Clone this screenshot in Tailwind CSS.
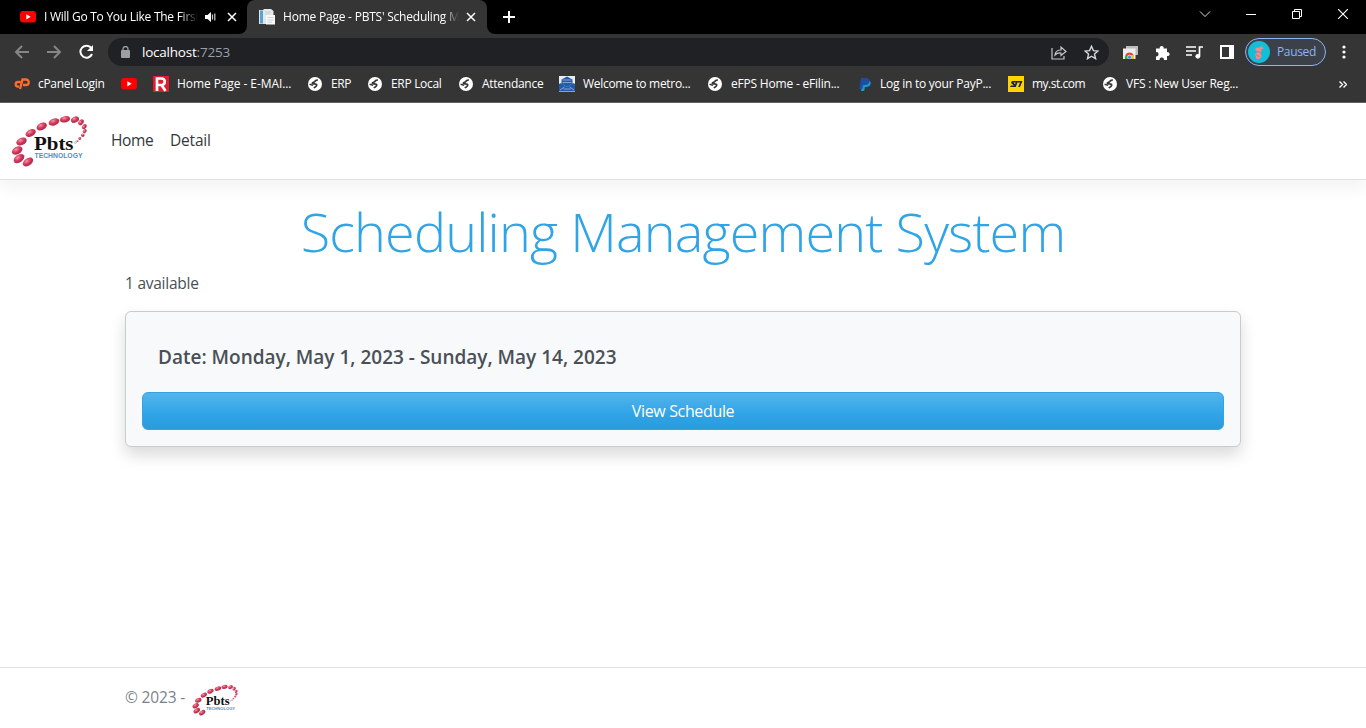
<!DOCTYPE html>
<html lang="en">
<head>
<meta charset="utf-8">
<title>Home Page - PBTS' Scheduling Management System</title>
<script src="https://cdn.jsdelivr.net/npm/@tailwindcss/browser@4"></script>
</head>
<body class="h-[728px] w-[1366px] overflow-hidden bg-white font-['Open_Sans','Noto_Sans',sans-serif]">
<svg class="absolute h-0 w-0">
  <defs><radialGradient id="bead" cx=".45" cy=".3"><stop offset="0" stop-color="#f59aae"/><stop offset=".55" stop-color="#dd4766"/><stop offset="1" stop-color="#bb3050"/></radialGradient></defs>
  <symbol id="yt" viewBox="0 0 16 12"><rect width="16" height="11.5" rx="3" fill="#f00"/><path d="M6.3 3.2v5.2l4.4-2.6z" fill="#fff"/></symbol>
  <symbol id="globe" viewBox="0 0 14 14"><circle cx="7" cy="7" r="7" fill="#fff"/><path d="M9.800 3.200C8.300 3 7.300 3.500 6.800 4.500 6 5.700 4.300 5 4.300 6.300c.2 1.200 4.200-.2 4.400 1.700.1 1.800-1.900 1.400-2.700 3.200" fill="none" stroke="#353535" stroke-width="1.700"/><path d="M1.600 7.200l3.600 1.200" stroke="#353535" stroke-width="1.500"/></symbol>
  <symbol id="logo" viewBox="11 115 78 52">
    <g fill="url(#bead)">
      <ellipse cx="65" cy="119.300" rx="5.200" ry="3.200" transform="rotate(-12 65 119.300)"/>
      <ellipse cx="75" cy="119.600" rx="4.200" ry="3" transform="rotate(-25 75 119.600)"/>
      <ellipse cx="81" cy="122.300" rx="3.300" ry="2.400" transform="rotate(-50 81 122.300)"/>
      <ellipse cx="84.300" cy="126.700" rx="2.800" ry="2" transform="rotate(-50 84.300 126.700)"/>
      <ellipse cx="84.800" cy="131.200" rx="2.300" ry="1.700" transform="rotate(-50 84.800 131.200)"/>
      <circle cx="82.800" cy="135.200" r="1.700"/><circle cx="79.800" cy="138.500" r="1.400"/><circle cx="77.500" cy="141" r="1"/>
      <ellipse cx="54" cy="122" rx="5.500" ry="3.400" transform="rotate(-20 54 122)"/>
      <ellipse cx="41.700" cy="126.500" rx="5.500" ry="3.500" transform="rotate(-25 41.700 126.500)"/>
      <ellipse cx="30.700" cy="133" rx="5.500" ry="3.500" transform="rotate(-28 30.700 133)"/>
      <ellipse cx="21.500" cy="141.500" rx="5.500" ry="3.600" transform="rotate(-25 21.500 141.500)"/>
      <ellipse cx="17.200" cy="150.500" rx="5.700" ry="3.700" transform="rotate(-30 17.200 150.500)"/>
      <ellipse cx="19" cy="158.600" rx="6" ry="3.800" transform="rotate(-35 19 158.600)"/>
      <ellipse cx="28" cy="162" rx="5.800" ry="3.600" transform="rotate(-35 28 162)"/>
    </g>
    <text x="34" y="150" font-family="Liberation Serif" font-weight="700" font-size="19.500" textLength="39.500" lengthAdjust="spacingAndGlyphs" fill="#111">Pbts</text>
    <circle cx="75.500" cy="142.500" r=".9" fill="none" stroke="#777" stroke-width=".5"/>
    <text x="34.500" y="158" font-family="Liberation Sans" font-weight="700" font-size="6.300" textLength="48" lengthAdjust="spacingAndGlyphs" fill="#4c8ec8">TECHNOLOGY</text>
  </symbol>
</svg>

<!-- Browser window -->
<div class="h-[103px] border-b border-[#626262] bg-[#353535] text-[12px] text-white">
  <div class="flex h-[34px] bg-[#353535]">
    <div class="flex w-[247px] items-center rounded-br-lg bg-black pl-5">
      <svg class="h-3 w-4"><use href="#yt"/></svg>
      <span class="ml-2 w-[154px] overflow-hidden whitespace-nowrap tracking-[-0.26px] [mask-image:linear-gradient(90deg,#000_88%,transparent)]">I Will Go To You Like The First</span>
      <svg class="ml-[7px] h-3 w-3" viewBox="0 0 12 12"><path d="M0 4h2.500L6 1v10L2.500 8H0z" fill="#fff"/><path d="M7.500 3.500v5M9.800 2.500v7" stroke="#ccc" stroke-width="1.200"/></svg>
      <svg class="ml-[10px] size-2.5" viewBox="0 0 10 10"><path d="M1 1l8 8M9 1L1 9" stroke="#fff" stroke-width="1.500"/></svg>
    </div>
    <div class="w-[240px] bg-black"><div class="flex h-full items-center rounded-t-lg bg-[#353535] pl-3">
      <svg class="size-4" viewBox="0 0 16 16"><path d="M0 1h9v14H0z" fill="#dce7ee"/><path d="M1 1.500h3v13H1z" fill="#5aa5d0"/><path d="M4.500 0h7.500l2.500 2v8h-10z" fill="#e6e8ea"/><path d="M7 6h9v9.500H7z" fill="#f8f8f8"/><path d="M6 3h6M6 5h5M8.500 8.500H14.500M8.500 11H14.500M8.500 13.200H13" stroke="#c3cacf" stroke-width=".8"/></svg>
      <span class="ml-2 w-[176px] overflow-hidden whitespace-nowrap tracking-[-0.22px] [mask-image:linear-gradient(90deg,#000_91%,transparent)]">Home Page - PBTS' Scheduling M</span>
      <svg class="ml-[7px] size-2.5" viewBox="0 0 10 10"><path d="M1 1l8 8M9 1L1 9" stroke="#fff" stroke-width="1.500"/></svg>
    </div></div>
    <div class="flex flex-1 rounded-bl-lg bg-black">
      <svg class="mt-[11px] ml-4 size-3" viewBox="0 0 12 12"><path d="M6 0v12M0 6h12" stroke="#fff" stroke-width="2"/></svg>
      <div class="mr-[18px] ml-auto flex h-[28px] items-center">
        <svg class="h-2.5 w-3" viewBox="0 0 12 10"><path d="M1 2.500l5 5 5-5" fill="none" stroke="#ddd"/></svg>
        <svg class="ml-[35px] h-2.5 w-2.5" viewBox="0 0 10 10"><path d="M0 5.500h10" stroke="#fff"/></svg>
        <svg class="ml-9 size-2.5" viewBox="0 0 10 10"><path d="M.5 2.500h7v7h-7zM2.500 2.500v-2h7v7h-2" fill="none" stroke="#fff"/></svg>
        <svg class="ml-9 size-2.5" viewBox="0 0 10 10"><path d="M0 0l10 10M10 0L0 10" stroke="#fff" stroke-width="1.100"/></svg>
      </div>
    </div>
  </div>

  <div class="flex h-9 items-center pl-[14px]">
    <svg class="h-4 w-[15px]" viewBox="0 0 15 16"><path d="M15 8H2M8 2L2 8l6 6" fill="none" stroke="#868686" stroke-width="2"/></svg>
    <svg class="ml-[18px] h-4 w-[15px]" viewBox="0 0 15 16"><path d="M0 8h13M7 2l6 6-6 6" fill="none" stroke="#868686" stroke-width="2"/></svg>
    <svg class="ml-[17px] h-4 w-[15px]" viewBox="0 0 15 16"><path d="M12.300 4.200A6 6 0 1 0 13 10" fill="none" stroke="#fff" stroke-width="2"/><path d="M14 1v6H8z" fill="#fff"/></svg>
    <div class="ml-[14px] flex h-7 w-[1001px] items-center rounded-full bg-[#202124] pl-[13px]">
      <svg class="h-3 w-[9px]" viewBox="0 0 9 12"><rect y="4" width="9" height="8" rx="1" fill="#9aa0a6"/><path d="M2 5V3a2.500 2.500 0 0 1 5 0v2" fill="none" stroke="#9aa0a6" stroke-width="1.300"/></svg>
      <span class="ml-3 text-[13.5px] tracking-[-0.22px]">localhost<span class="text-[#9aa0a6]">:7253</span></span>
      <svg class="mr-[17px] ml-auto size-4" viewBox="0 0 16 16"><path d="M1 4v11h12v-3M4 11c.4-3.500 2.400-5 6-5V3l5 4.500-5 4V9c-2.500-.2-4.300.3-6 2z" fill="none" stroke="#c5c7c9" stroke-width="1.200"/></svg>
      <svg class="mr-[10px] size-[15px]" viewBox="0 0 15 15"><path d="M7.500 1.300l1.900 4.300 4.600.4-3.500 3.100 1.100 4.600-4.100-2.500-4 2.500 1-4.600L1 6l4.600-.4z" fill="none" stroke="#d6d8da" stroke-width="1.400"/></svg>
    </div>
    <svg class="ml-[14px] h-[13px] w-[15px]" viewBox="0 0 15 13"><path d="M3 0h12v9H3z" fill="#bdbdbd"/><path d="M0 2.500h12.500V13H0z" fill="#eee"/><path d="M2 13a4.500 4.500 0 0 1 2.300-5L6.500 13z" fill="#34a853"/><path d="M2.200 9.500a4.600 4.600 0 0 1 8.600 0z" fill="#ea4335"/><path d="M10.800 9.500H7l1 3.500h3z" fill="#fbbc04"/><circle cx="6.500" cy="11.200" r="2" fill="#4285f4" stroke="#fff" stroke-width=".6"/></svg>
    <svg class="ml-[17px] size-[15px]" viewBox="0 0 15 15"><path d="M1 3.500h3.800a2 2 0 1 1 3.800 0h3.400v3.700a2 2 0 1 1 0 3.800v4H8.800a2.100 2.100 0 1 0-4.100 0H1v-3.700a2.100 2.100 0 1 0 0-4.100z" fill="#fff"/></svg>
    <svg class="ml-4 h-[14px] w-[17px]" viewBox="0 0 17 14"><path d="M0 2h10M0 6h10M0 10h6M13.500 11V2H17" fill="none" stroke="#fff" stroke-width="1.700"/><circle cx="11.800" cy="11.300" r="2.400" fill="#fff"/></svg>
    <svg class="ml-[17px] h-[14px] w-[14px]" viewBox="0 0 14 14"><path d="M1 1h12v12H1z" fill="none" stroke="#fff" stroke-width="2"/><path d="M9 0h5v14H9z" fill="#fff"/></svg>
    <div class="ml-[11px] flex h-7 w-[81px] items-center rounded-full border border-[#8ab4f8] bg-[#3c4048] pl-[2px] text-[#8ab4f8]">
      <svg class="size-[22px]" viewBox="0 0 22 22"><circle cx="11" cy="11" r="11" fill="#12bfd6"/><path d="M7 8C8 6.500 9.500 6.500 11.500 6.500L14.500 4.500l-1 2 3 .2-3.500 2 .5 2.300-1.500 1c2.500 2 1.500 5-1 6H8.500L7 13l3-2-2-1.500z" fill="#f38b8d"/><path d="M9.500 10.500l3 .8M8 14l3.500 1.500" stroke="#d4616f" stroke-width=".8"/></svg>
      <span class="ml-[7px] tracking-[-0.35px]">Paused</span>
    </div>
    <svg class="ml-4 h-[14px] w-1" viewBox="0 0 4 14" fill="#fff"><circle cx="2" cy="2" r="1.600"/><circle cx="2" cy="7" r="1.600"/><circle cx="2" cy="12" r="1.600"/></svg>
  </div>

  <div class="flex h-7 items-center pl-[14px] whitespace-nowrap">
    <div class="flex w-[107px] items-center"><svg class="h-3 w-4" viewBox="0 0 16 12"><path d="M6.500 4H4a2.300 2.300 0 0 0 0 4.600h1M6 11L8.500 1.500H12a2.400 2.400 0 0 1 0 5.500H9" fill="none" stroke="#ff6c2c" stroke-width="2.300"/></svg><span class="ml-2 tracking-[-0.32px]">cPanel Login</span></div>
    <div class="flex w-8 items-center"><svg class="h-3 w-4"><use href="#yt"/></svg></div>
    <div class="flex w-[154px] items-center"><svg class="size-4" viewBox="0 0 16 16"><path d="M0 0h16v16H0z" fill="#e31b2c"/><path d="M4 15V2.500h5a3.300 3.300 0 0 1 0 6.500H5M8.500 9l4 6" fill="none" stroke="#fff" stroke-width="2.700"/></svg><span class="ml-2 tracking-[-0.08px]">Home Page - E-MAI...</span></div>
    <div class="flex w-[60px] items-center"><svg class="mx-px size-[14px]"><use href="#globe"/></svg><span class="ml-2 tracking-[-0.35px]">ERP</span></div>
    <div class="flex w-[91px] items-center"><svg class="mx-px size-[14px]"><use href="#globe"/></svg><span class="ml-2 tracking-[-0.32px]">ERP Local</span></div>
    <div class="flex w-[101px] items-center"><svg class="mx-px size-[14px]"><use href="#globe"/></svg><span class="ml-2 tracking-[-0.27px]">Attendance</span></div>
    <div class="flex w-[148px] items-center"><svg class="size-4" viewBox="0 0 16 16"><path d="M0 0h16v16H0z" fill="#e8eef7"/><path d="M8 .5l5.500 3v4L8 11 2.500 7.500v-4z" fill="#2459a9"/><path d="M0 8l2-1 6 4 6-4 2 1v7.500H0z" fill="#2459a9"/><path d="M3.500 4h9M3.500 6.500h9M1 14l4.500-3M15 14l-4.500-3M4.500 13h7" stroke="#9db9df" stroke-width=".8"/></svg><span class="ml-2 tracking-[-0.3px]">Welcome to metro...</span></div>
    <div class="flex w-[150px] items-center"><svg class="mx-px size-[14px]"><use href="#globe"/></svg><span class="ml-2 tracking-[-0.2px]">eFPS Home - eFilin...</span></div>
    <div class="flex w-[151px] items-center"><svg class="size-4" viewBox="0 0 16 16"><path d="M5.500 4.500h6.500q2.300 1.200 1.500 3.800-.9 2.700-4.300 2.700H8l-.8 4H4z" fill="#169bd7"/><path d="M4 2h5.500q3.600.5 3 3.500-.8 3.500-4.500 3.500H6.200L5.200 13H2.200z" fill="#1f4c9c"/></svg><span class="ml-[7px] tracking-[-0.24px]">Log in to your PayP...</span></div>
    <div class="flex w-[94px] items-center"><svg class="size-4" viewBox="0 0 16 16"><path d="M0 0h16v16H0z" fill="#ffd200"/><path d="M4 5h10.500l-2.500 6h-1.800l1.800-4.500H9.500L7.800 11H2l.8-1.500h3L3 7z" fill="#182747"/><path d="M5.500 6.600h2.200L7 8.300z" fill="#ffd200"/></svg><span class="ml-2 tracking-[-0.5px]">my.st.com</span></div>
    <div class="flex items-center"><svg class="mx-px size-[14px]"><use href="#globe"/></svg><span class="ml-2 tracking-[-0.22px]">VFS : New User Reg...</span></div>
    <svg class="mr-[19px] ml-auto h-[7px] w-2" viewBox="0 0 8 7"><path d="M.5.500l3 3-3 3M4.500.500l3 3-3 3" fill="none" stroke="#fff" stroke-width="1.400"/></svg>
  </div>
</div>

<!-- Site -->
<div class="flex h-[625px] flex-col text-[#495057]">
  <header class="flex h-[77px] items-center border-b border-[#dee2e6] pl-[11px] text-[15.5px] text-[#34383c] shadow-[0_8px_16px_rgba(0,0,0,0.05)]">
    <svg class="h-[52px] w-[78px]"><use href="#logo"/></svg>
    <nav class="ml-[22px] flex gap-4"><a class="w-[43px] whitespace-nowrap tracking-[-0.35px]">Home</a><a class="tracking-[-0.2px]">Detail</a></nav>
  </header>
  <main class="mx-auto w-[1116px] flex-1 pt-[13px]">
    <h1 class="text-center text-[54px] leading-[76px] font-light tracking-[-0.86px] whitespace-nowrap text-[#2fa4e7]">Scheduling Management System</h1>
    <p class="mt-[2px] text-[15.5px] leading-6 tracking-[-0.25px]">1 available</p>
    <section class="mt-4 h-[136px] rounded-[6px] border border-[#c9cbcd] bg-[#f8f9fa] px-4 pt-8 shadow-[0_8px_16px_rgba(0,0,0,0.15)]">
      <h5 class="px-4 text-[19px] leading-[27px] font-semibold">Date: Monday, May 1, 2023 - Sunday, May 14, 2023</h5>
      <button class="mt-[21px] block h-[38px] w-full rounded-[6px] border border-[#2fa4e7] bg-[linear-gradient(#54b4eb,#2fa4e7_60%,#2c9ad9)] text-[16px] leading-9 tracking-[-0.35px] text-white">View Schedule</button>
    </section>
  </main>
  <footer class="flex h-[61px] items-center border-t border-[#dee2e6] pl-[125px] text-[15.5px] text-[#7b838a]">
    <span class="w-[67px] whitespace-nowrap tracking-[-0.15px]">© 2023 -</span>
    <svg class="mt-1 h-[32px] w-[47px]"><use href="#logo"/></svg>
  </footer>
</div>
</body>
</html>
